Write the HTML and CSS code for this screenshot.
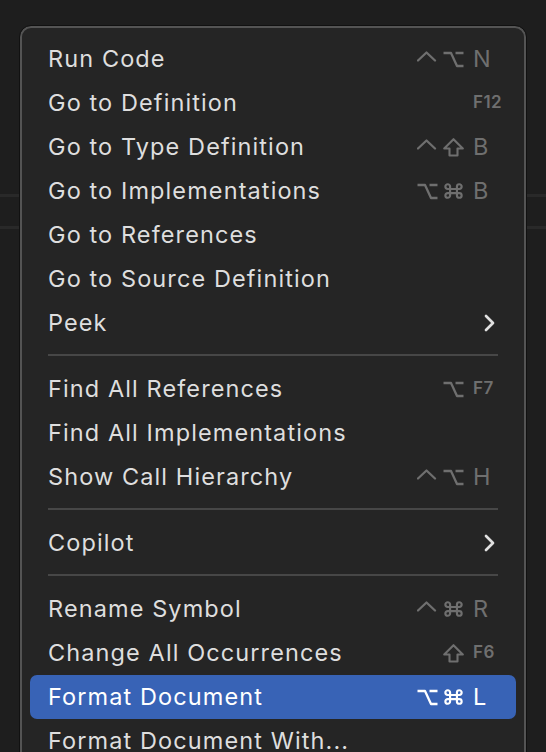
FILE: index.html
```html
<!DOCTYPE html>
<html lang="en">
<head>
<meta charset="utf-8">
<title>Context menu</title>
<link rel="stylesheet" href="styles.css">
</head>
<body>
<svg class="defs" width="0" height="0" aria-hidden="true">
  <defs>
    <symbol id="ctrl" viewBox="0 0 21 17"><path d="M1 9.5 L9.5 1.5 L18 9.5" fill="none" stroke="currentColor" stroke-width="2.3" stroke-linecap="round" stroke-linejoin="round"/></symbol>
    <symbol id="opt" viewBox="0 0 21 17"><path d="M0.5 2 H8 L14 15 H20.5 M12.5 2 H20.5" fill="none" stroke="currentColor" stroke-width="2.3" stroke-linejoin="round"/></symbol>
    <symbol id="cmd" viewBox="0 0 21 17"><path transform="translate(1.2 -0.8) scale(0.98)" d="M13 4.5v9a2.4 2.4 0 1 0 2.4-2.4H3.6a2.4 2.4 0 1 0 2.4 2.4v-9a2.4 2.4 0 1 0-2.4 2.4h11.8a2.4 2.4 0 1 0-2.4-2.4z" fill="none" stroke="currentColor" stroke-width="2.2" stroke-linejoin="round"/></symbol>
    <symbol id="shift" viewBox="0 0 21 19"><path d="M6.5 17.5 V10.5 H1.2 L10.5 1.2 L19.8 10.5 H14.5 V17.5 Z" fill="none" stroke="currentColor" stroke-width="2.1" stroke-linejoin="round"/></symbol>
    <symbol id="chev" viewBox="0 0 11 18"><path d="M2 2 L9 9 L2 16" fill="none" stroke="currentColor" stroke-width="2.7" stroke-linecap="round" stroke-linejoin="round"/></symbol>
  </defs>
</svg>

<div class="menu">
  <div class="item"><span class="label">Run Code</span><span class="mods"><svg class="mod"><use href="#ctrl"/></svg><svg class="mod"><use href="#opt"/></svg></span><span class="key">N</span></div>
  <div class="item"><span class="label">Go to Definition</span><span class="mods"></span><span class="key fn">F12</span></div>
  <div class="item"><span class="label">Go to Type Definition</span><span class="mods"><svg class="mod"><use href="#ctrl"/></svg><svg class="mod tall"><use href="#shift"/></svg></span><span class="key">B</span></div>
  <div class="item"><span class="label">Go to Implementations</span><span class="mods"><svg class="mod"><use href="#opt"/></svg><svg class="mod"><use href="#cmd"/></svg></span><span class="key">B</span></div>
  <div class="item"><span class="label">Go to References</span></div>
  <div class="item"><span class="label">Go to Source Definition</span></div>
  <div class="item"><span class="label">Peek</span><svg class="chev"><use href="#chev"/></svg></div>
  <div class="sep"></div>
  <div class="item"><span class="label">Find All References</span><span class="mods"><svg class="mod"><use href="#opt"/></svg></span><span class="key fn">F7</span></div>
  <div class="item"><span class="label">Find All Implementations</span></div>
  <div class="item"><span class="label">Show Call Hierarchy</span><span class="mods"><svg class="mod"><use href="#ctrl"/></svg><svg class="mod"><use href="#opt"/></svg></span><span class="key">H</span></div>
  <div class="sep"></div>
  <div class="item"><span class="label">Copilot</span><svg class="chev"><use href="#chev"/></svg></div>
  <div class="sep"></div>
  <div class="item"><span class="label">Rename Symbol</span><span class="mods"><svg class="mod"><use href="#ctrl"/></svg><svg class="mod"><use href="#cmd"/></svg></span><span class="key">R</span></div>
  <div class="item"><span class="label">Change All Occurrences</span><span class="mods"><svg class="mod tall"><use href="#shift"/></svg></span><span class="key fn">F6</span></div>
  <div class="item active"><span class="label">Format Document</span><span class="mods"><svg class="mod"><use href="#opt"/></svg><svg class="mod"><use href="#cmd"/></svg></span><span class="key">L</span></div>
  <div class="item"><span class="label">Format Document With...</span></div>
</div>
</body>
</html>
```

FILE: styles.css
```css
html, body {
  margin: 0;
  padding: 0;
}

body {
  height: 752px;
  overflow: hidden;
  background:
    linear-gradient(to bottom,
      transparent 194px, #292929 194px, #292929 197px, transparent 197px,
      transparent 226px, #292929 226px, #292929 229px, transparent 229px),
    #1e1e1e;
  font-family: Inter, "Noto Sans", "Liberation Sans", sans-serif;
  -webkit-font-smoothing: antialiased;
}

.defs {
  display: block;
  width: 0;
  height: 0;
  overflow: hidden;
}

.menu {
  box-sizing: border-box;
  width: 508px;
  margin: 25px 0 0 19px;
  padding: 11px 10px 20px;
  border: 1px solid #111111;
  border-radius: 12px;
  background: #252525;
  box-shadow: inset 0 0 0 2px #545454;
}

.item {
  display: flex;
  align-items: center;
  height: 44px;
  padding: 0 13px 0 18px;
  border-radius: 7px;
  color: #dedede;
  font-size: 23.5px;
  letter-spacing: 1.1px;
}

.label,
.key {
  padding-bottom: 2px;
}

.label {
  flex: 1;
  white-space: nowrap;
}

.mods {
  display: flex;
  align-items: center;
  gap: 5px;
  margin-right: 9px;
  color: #6f6f6f;
}

.mod {
  width: 21px;
  height: 17px;
  display: block;
}

.mod.tall {
  height: 19px;
}

.key {
  width: 30px;
  color: #6f6f6f;
  white-space: nowrap;
  letter-spacing: 0;
}

.key.fn {
  font-size: 17px;
  font-weight: 600;
  letter-spacing: 0.4px;
}

.chev {
  display: block;
  width: 11px;
  height: 18px;
  margin-right: 8px;
  color: #e0e0e0;
}

.sep {
  height: 2px;
  margin: 9px 18px 11px;
  background: #474747;
}

.item.active {
  background: #3863b6;
  color: #ffffff;
}

.item.active .mods,
.item.active .key {
  color: #ffffff;
}
```
